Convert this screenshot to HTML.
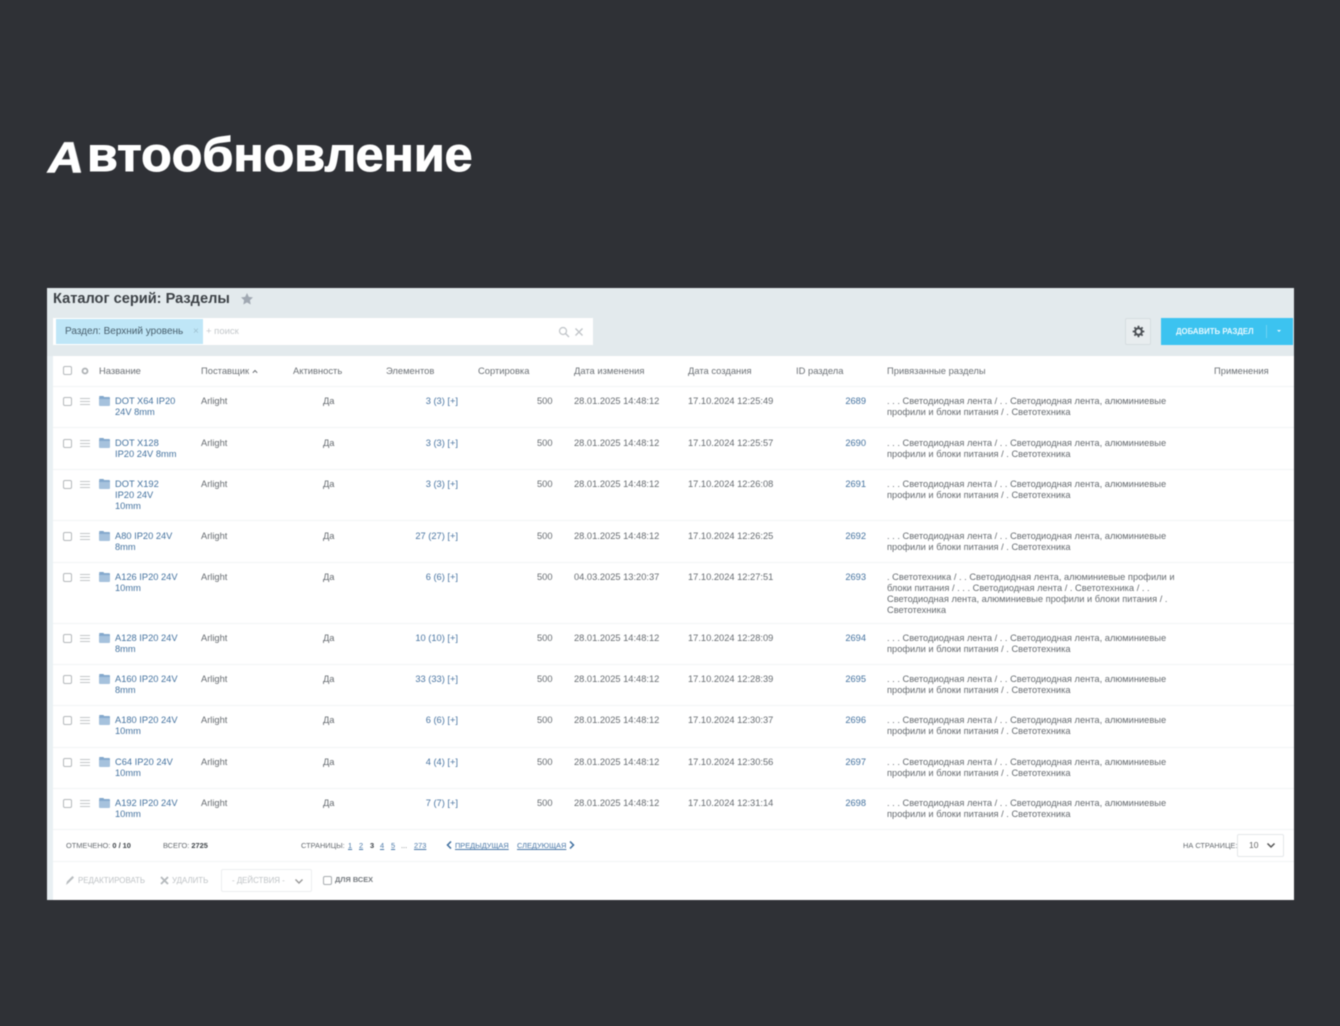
<!DOCTYPE html>
<html lang="ru"><head><meta charset="utf-8"><title>Автообновление</title>
<style>
*{box-sizing:border-box}
html,body{margin:0;padding:0;width:1340px;height:1026px;overflow:hidden;background:#2f3136}
body{position:relative;font-family:"Liberation Sans","Noto Sans CJK SC",sans-serif}
.title{position:absolute;font-weight:700;line-height:54px;color:#fff;white-space:nowrap;transform-origin:0 100%;-webkit-text-stroke:1px #fff;filter:blur(.4px)}
.panel{position:absolute;left:47px;top:288px;width:1247px;height:612px;background:#fff;overflow:hidden;filter:blur(.45px)}
.top{position:absolute;left:0;top:0;width:1247px;height:68px;background:#e3eaed}
.strip{position:absolute;left:0;top:68px;width:6px;height:544px;background:#e9f0f3}
.h1{position:absolute;left:6px;top:3px;font-size:14.6px;line-height:17px;font-weight:700;color:#3c4146;white-space:nowrap}
.search{position:absolute;left:6px;top:30px;width:540px;height:27px;background:#fff}
.tag{position:absolute;left:3px;top:1px;width:147px;height:25px;background:#bfe6f7;font-size:10px;line-height:25px;color:#49606e;padding-left:9px;white-space:nowrap}
.abs{position:absolute;white-space:nowrap}
.btn{position:absolute;left:1114px;top:30px;width:132px;height:27px;background:#3cc3f0;color:#e9f9ff;font-size:7.8px;font-weight:700;line-height:27px}
.gear{position:absolute;left:1078px;top:30px;width:26px;height:27px;background:#e8edef;border:1px solid #d6dde0;border-radius:2px}
.th{position:absolute;top:77px;font-size:9.4px;line-height:12px;color:#6c7176;white-space:nowrap}
.line{position:absolute;left:6px;width:1241px;height:1px;background:#f2f4f5}
.r{position:absolute;left:0;width:1247px;height:11px;font-size:9.3px;line-height:11px;color:#666b70}
.r>*{position:absolute;top:0;white-space:nowrap}
.cb{left:16px;top:1px!important;width:9px;height:9px;border:1px solid #b4b8bb;border-radius:2px;background:#fff}
.mn{left:33px;top:2px!important;width:10px;height:7px;border-top:1px solid #c3c6c9;border-bottom:1px solid #c3c6c9}
.mn:after{content:"";position:absolute;left:0;right:0;top:2px;height:1px;background:#c3c6c9}
.fd{left:52px;top:1px!important;width:11px;height:9px;background:linear-gradient(#86aace 0,#86aace 2px,#a6c2dd 2px);border-radius:1px}
.fd:before{content:"";position:absolute;left:0;top:-1px;width:5px;height:1px;background:#7ea4c9;border-radius:1px 1px 0 0}
.nm{left:68px;color:#44729f;line-height:11px;white-space:pre!important}
.sp{left:154px}.ac{left:276px}
.el{right:836px;color:#4a75a2}
.so{left:490px}.d1{left:527px}.d2{left:641px}
.id{right:428px;color:#44729f}
.ds{left:840px;white-space:pre!important;line-height:11px}
.ft{position:absolute;font-size:7.4px;line-height:10px;color:#666b70;white-space:nowrap}
.ft b{color:#3f4449}
.ft u{color:#4a78a8;margin-left:0}
</style></head><body>
<div class="title" style="left:44px;top:131px;font-size:43px;transform:scaleX(1.15) skewX(-8deg)">А</div>
<div class="title" style="left:87px;top:129px;font-size:48px;transform:scaleX(1.045)">втообновление</div>
<div class="panel">
<div class="top"></div><div class="strip"></div>
<div class="h1">Каталог серий: Разделы</div>
<svg class="abs" style="left:193px;top:4px" width="14" height="14" viewBox="0 0 14 14"><path d="M7 1l1.800 3.900 4.200.5-3.100 2.900.8 4.200L7 10.400 3.300 12.500l.8-4.200L1 5.400l4.200-.5z" fill="#a0a8b2"/></svg>
<div class="search"><div class="tag">Раздел: Верхний уровень<span class="abs" style="left:137px;top:0;color:#9fc0d0">×</span></div>
<span class="abs" style="left:153px;top:0;font-size:9.5px;line-height:27px;color:#c4c8cb">+ поиск</span>
<svg class="abs" style="left:505px;top:8px" width="12" height="12" viewBox="0 0 12 12"><circle cx="5" cy="5" r="3.500" fill="none" stroke="#c0c4c8" stroke-width="1.200"/><path d="M7.500 7.500L11 11" stroke="#c0c4c8" stroke-width="1.300"/></svg>
<svg class="abs" style="left:521px;top:9px" width="10" height="10" viewBox="0 0 10 10"><path d="M1.500 1.500l7 7M8.500 1.500l-7 7" stroke="#c0c4c8" stroke-width="1.300"/></svg></div>
<div class="gear"><svg class="abs" style="left:6px;top:6px" width="13" height="13" viewBox="0 0 13 13"><circle cx="6.500" cy="6.500" r="3.300" fill="none" stroke="#4a4f54" stroke-width="2"/><path d="M6.500.7v2M6.500 10.300v2M.7 6.500h2M10.300 6.500h2M2.400 2.400l1.400 1.400M9.200 9.200l1.400 1.400M2.400 10.600l1.400-1.400M9.200 3.800l1.400-1.400" stroke="#4a4f54" stroke-width="1.800"/></svg></div>
<div class="btn"><span class="abs" style="left:15px;top:0">ДОБАВИТЬ РАЗДЕЛ</span><span class="abs" style="left:105px;top:7px;width:1px;height:13px;background:#6fd3f4"></span><span class="abs" style="left:116px;top:12px;border:2.500px solid transparent;border-top-color:#e9f9ff"></span></div>

<div class="abs" style="left:16px;top:78px;width:9px;height:9px;border:1px solid #b4b8bb;border-radius:2px"></div>
<svg class="abs" style="left:33px;top:78px" width="10" height="10" viewBox="0 0 10 10"><circle cx="5" cy="5" r="2.500" fill="none" stroke="#aeb2b5" stroke-width="1.800"/></svg>
<div class="th" style="left:52px">Название</div>
<div class="th" style="left:154px">Поставщик <svg width="6" height="5" viewBox="0 0 6 5"><path d="M.8 3.800L3 1.500l2.200 2.300" fill="none" stroke="#6c7176" stroke-width="1"/></svg></div>
<div class="th" style="left:246px">Активность</div>
<div class="th" style="left:339px">Элементов</div>
<div class="th" style="left:431px">Сортировка</div>
<div class="th" style="left:527px">Дата изменения</div>
<div class="th" style="left:641px">Дата создания</div>
<div class="th" style="left:749px">ID раздела</div>
<div class="th" style="left:840px">Привязанные разделы</div>
<div class="th" style="left:1167px">Применения</div>

<div class="line" style="top:98px"></div>
<div class="line" style="top:139px"></div>
<div class="line" style="top:181px"></div>
<div class="line" style="top:232px"></div>
<div class="line" style="top:274px"></div>
<div class="line" style="top:335px"></div>
<div class="line" style="top:376px"></div>
<div class="line" style="top:417px"></div>
<div class="line" style="top:459px"></div>
<div class="line" style="top:500px"></div>
<div class="line" style="top:541px"></div>
<div class="line" style="top:573px"></div>

<div class="r" style="top:108px"><i class="cb"></i><i class="mn"></i><i class="fd"></i><span class="nm">DOT X64 IP20
24V 8mm</span><span class="sp">Arlight</span><span class="ac">Да</span><span class="el">3 (3) [+]</span><span class="so">500</span><span class="d1">28.01.2025 14:48:12</span><span class="d2">17.10.2024 12:25:49</span><span class="id">2689</span><span class="ds">. . . Светодиодная лента / . . Светодиодная лента, алюминиевые
профили и блоки питания / . Светотехника</span></div>

<div class="r" style="top:150px"><i class="cb"></i><i class="mn"></i><i class="fd"></i><span class="nm">DOT X128
IP20 24V 8mm</span><span class="sp">Arlight</span><span class="ac">Да</span><span class="el">3 (3) [+]</span><span class="so">500</span><span class="d1">28.01.2025 14:48:12</span><span class="d2">17.10.2024 12:25:57</span><span class="id">2690</span><span class="ds">. . . Светодиодная лента / . . Светодиодная лента, алюминиевые
профили и блоки питания / . Светотехника</span></div>

<div class="r" style="top:191px"><i class="cb"></i><i class="mn"></i><i class="fd"></i><span class="nm">DOT X192
IP20 24V
10mm</span><span class="sp">Arlight</span><span class="ac">Да</span><span class="el">3 (3) [+]</span><span class="so">500</span><span class="d1">28.01.2025 14:48:12</span><span class="d2">17.10.2024 12:26:08</span><span class="id">2691</span><span class="ds">. . . Светодиодная лента / . . Светодиодная лента, алюминиевые
профили и блоки питания / . Светотехника</span></div>

<div class="r" style="top:243px"><i class="cb"></i><i class="mn"></i><i class="fd"></i><span class="nm">A80 IP20 24V
8mm</span><span class="sp">Arlight</span><span class="ac">Да</span><span class="el">27 (27) [+]</span><span class="so">500</span><span class="d1">28.01.2025 14:48:12</span><span class="d2">17.10.2024 12:26:25</span><span class="id">2692</span><span class="ds">. . . Светодиодная лента / . . Светодиодная лента, алюминиевые
профили и блоки питания / . Светотехника</span></div>

<div class="r" style="top:284px"><i class="cb"></i><i class="mn"></i><i class="fd"></i><span class="nm">A126 IP20 24V
10mm</span><span class="sp">Arlight</span><span class="ac">Да</span><span class="el">6 (6) [+]</span><span class="so">500</span><span class="d1">04.03.2025 13:20:37</span><span class="d2">17.10.2024 12:27:51</span><span class="id">2693</span><span class="ds">. Светотехника / . . Светодиодная лента, алюминиевые профили и
блоки питания / . . . Светодиодная лента / . Светотехника / . .
Светодиодная лента, алюминиевые профили и блоки питания / .
Светотехника</span></div>

<div class="r" style="top:345px"><i class="cb"></i><i class="mn"></i><i class="fd"></i><span class="nm">A128 IP20 24V
8mm</span><span class="sp">Arlight</span><span class="ac">Да</span><span class="el">10 (10) [+]</span><span class="so">500</span><span class="d1">28.01.2025 14:48:12</span><span class="d2">17.10.2024 12:28:09</span><span class="id">2694</span><span class="ds">. . . Светодиодная лента / . . Светодиодная лента, алюминиевые
профили и блоки питания / . Светотехника</span></div>

<div class="r" style="top:386px"><i class="cb"></i><i class="mn"></i><i class="fd"></i><span class="nm">A160 IP20 24V
8mm</span><span class="sp">Arlight</span><span class="ac">Да</span><span class="el">33 (33) [+]</span><span class="so">500</span><span class="d1">28.01.2025 14:48:12</span><span class="d2">17.10.2024 12:28:39</span><span class="id">2695</span><span class="ds">. . . Светодиодная лента / . . Светодиодная лента, алюминиевые
профили и блоки питания / . Светотехника</span></div>

<div class="r" style="top:427px"><i class="cb"></i><i class="mn"></i><i class="fd"></i><span class="nm">A180 IP20 24V
10mm</span><span class="sp">Arlight</span><span class="ac">Да</span><span class="el">6 (6) [+]</span><span class="so">500</span><span class="d1">28.01.2025 14:48:12</span><span class="d2">17.10.2024 12:30:37</span><span class="id">2696</span><span class="ds">. . . Светодиодная лента / . . Светодиодная лента, алюминиевые
профили и блоки питания / . Светотехника</span></div>

<div class="r" style="top:469px"><i class="cb"></i><i class="mn"></i><i class="fd"></i><span class="nm">C64 IP20 24V
10mm</span><span class="sp">Arlight</span><span class="ac">Да</span><span class="el">4 (4) [+]</span><span class="so">500</span><span class="d1">28.01.2025 14:48:12</span><span class="d2">17.10.2024 12:30:56</span><span class="id">2697</span><span class="ds">. . . Светодиодная лента / . . Светодиодная лента, алюминиевые
профили и блоки питания / . Светотехника</span></div>

<div class="r" style="top:510px"><i class="cb"></i><i class="mn"></i><i class="fd"></i><span class="nm">A192 IP20 24V
10mm</span><span class="sp">Arlight</span><span class="ac">Да</span><span class="el">7 (7) [+]</span><span class="so">500</span><span class="d1">28.01.2025 14:48:12</span><span class="d2">17.10.2024 12:31:14</span><span class="id">2698</span><span class="ds">. . . Светодиодная лента / . . Светодиодная лента, алюминиевые
профили и блоки питания / . Светотехника</span></div>

<div class="ft" style="left:19px;top:553px">ОТМЕЧЕНО: <b>0 / 10</b></div>
<div class="ft" style="left:116px;top:553px">ВСЕГО: <b>2725</b></div>
<div class="ft" style="left:254px;top:553px">СТРАНИЦЫ:</div>
<div class="ft" style="left:301px;top:553px"><u>1</u></div>
<div class="ft" style="left:312px;top:553px"><u>2</u></div>
<div class="ft" style="left:323px;top:553px"><b>3</b></div>
<div class="ft" style="left:333px;top:553px"><u>4</u></div>
<div class="ft" style="left:344px;top:553px"><u>5</u></div>
<div class="ft" style="left:354px;top:553px">...</div>
<div class="ft" style="left:367px;top:553px"><u>273</u></div>
<svg class="abs" style="left:399px;top:553px" width="6" height="8" viewBox="0 0 6 8"><path d="M5 .5L1.500 4 5 7.500" fill="none" stroke="#3f6f9f" stroke-width="1.500"/></svg>
<div class="ft" style="left:408px;top:553px"><u>ПРЕДЫДУЩАЯ</u></div>
<div class="ft" style="left:470px;top:553px"><u>СЛЕДУЮЩАЯ</u></div>
<svg class="abs" style="left:522px;top:553px" width="6" height="8" viewBox="0 0 6 8"><path d="M1 .5L4.500 4 1 7.500" fill="none" stroke="#3f6f9f" stroke-width="1.500"/></svg>
<div class="ft" style="left:1136px;top:553px">НА СТРАНИЦЕ:</div>
<div class="abs" style="left:1190px;top:546px;width:47px;height:23px;border:1px solid #e4e7e9;border-radius:2px;font-size:8.500px;line-height:21px;color:#666;padding-left:11px">10<svg class="abs" style="left:28px;top:7px" width="10" height="7" viewBox="0 0 10 7"><path d="M1.500 1.500L5 5l3.500-3.500" fill="none" stroke="#555" stroke-width="1.500"/></svg></div>

<svg class="abs" style="left:18px;top:587px" width="10" height="11" viewBox="0 0 10 11"><path d="M1 10l1-3.500L7.500 1 9 2.500 3.500 8z" fill="#b8bcbf"/></svg>
<div class="ft" style="left:31px;top:588px;color:#bfc3c6;font-size:7.9px">РЕДАКТИРОВАТЬ</div>
<svg class="abs" style="left:113px;top:588px" width="9" height="9" viewBox="0 0 9 9"><path d="M1 1l7 7M8 1L1 8" stroke="#b4b8bb" stroke-width="1.800"/></svg>
<div class="ft" style="left:125px;top:588px;color:#bfc3c6;font-size:7.9px">УДАЛИТЬ</div>
<div class="abs" style="left:174px;top:581px;width:91px;height:23px;border:1px solid #eceef0;border-radius:2px;font-size:7.9px;line-height:21px;color:#bfc3c6;padding-left:10px">- ДЕЙСТВИЯ -<svg class="abs" style="left:72px;top:8px" width="10" height="7" viewBox="0 0 10 7"><path d="M1.500 1.500L5 5l3.500-3.500" fill="none" stroke="#999" stroke-width="1.400"/></svg></div>
<div class="abs" style="left:276px;top:588px;width:9px;height:9px;border:1px solid #a9adb1;border-radius:2px"></div>
<div class="ft" style="left:288px;top:587px;color:#74797e;font-weight:700">ДЛЯ ВСЕХ</div>
</div>
</body></html>
